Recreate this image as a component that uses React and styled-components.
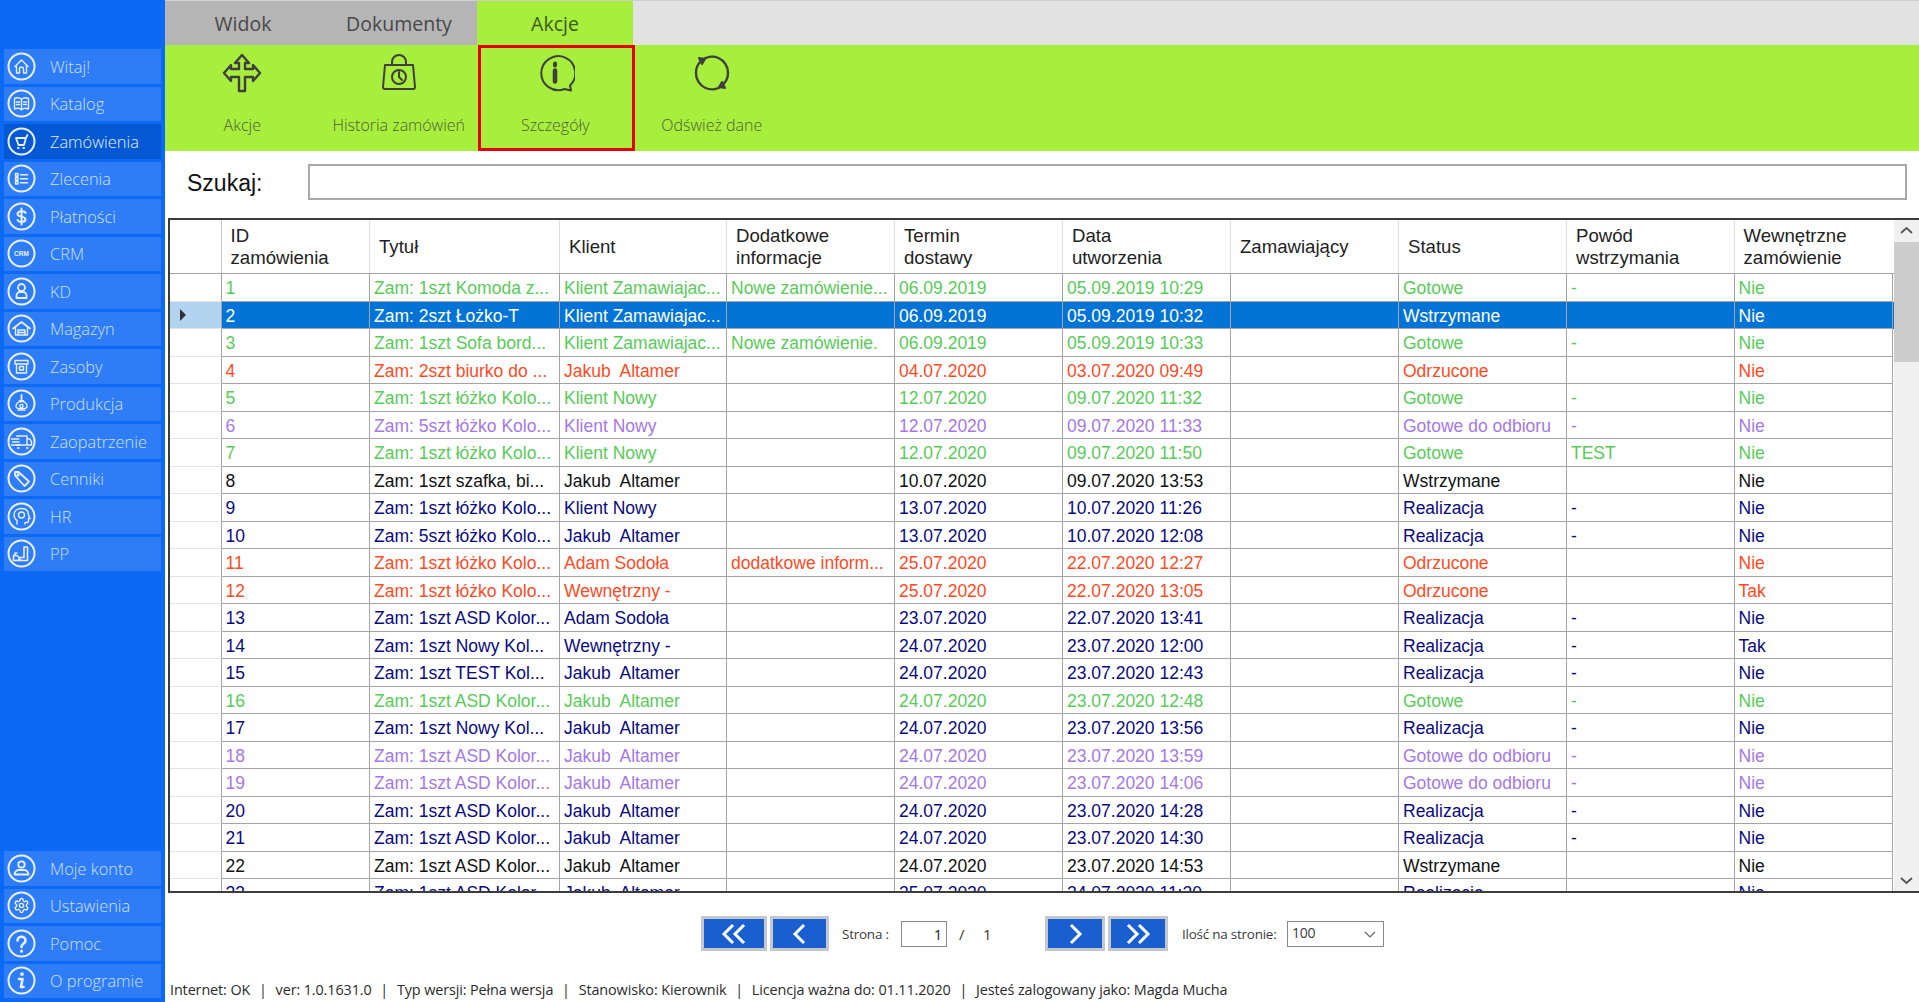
import React from 'react';
import styled, { createGlobalStyle } from 'styled-components';

const Global = createGlobalStyle`
  html, body { margin: 0; padding: 0; background: #fff; }
  body { font-family: "Open Sans", "Liberation Sans", sans-serif; overflow: hidden; }
  * { box-sizing: border-box; }
`;

const COLS = '51.5px 148.5px 190px 167px 168px 168px 168px 168px 168px 167.5px 158.7px';

const tones = {
  green: '#58cb58',
  red: '#ff4a1f',
  navy: '#0a0a80',
  purple: '#a478e6',
  black: '#111111',
  sel: '#ffffff',
};

const Page = styled.div`
  display: flex;
  width: 1919px;
  height: 1002px;
  overflow: hidden;
`;

const Sidebar = styled.nav`
  width: 165px;
  flex: none;
  background: #0c69f6;
  padding: 49px 4px 4px;
  display: flex;
  flex-direction: column;
  justify-content: space-between;
`;

const NavGroup = styled.div`
  display: flex;
  flex-direction: column;
  gap: 3px;
`;

const NavItem = styled.div`
  height: 34.5px;
  display: flex;
  align-items: center;
  gap: 14px;
  padding-left: 3px;
  background: ${p => (p.$active ? '#0558d4' : '#2f7cf7')};
  color: ${p => (p.$active ? '#e6efff' : '#cfe0ff')};
  font-size: 16.4px;
  font-weight: 300;
  white-space: nowrap;
`;

const NavIcon = styled.svg`
  width: 29px;
  height: 29px;
  flex: none;
  fill: none;
  stroke: #e8f0ff;
  stroke-width: 1.4;
  stroke-linecap: round;
  stroke-linejoin: round;
`;

const Main = styled.main`
  flex: 1;
  min-width: 0;
  display: flex;
  flex-direction: column;
`;

const TabBar = styled.div`
  height: 45px;
  flex: none;
  display: flex;
  background: #e2e2e2;
  border-top: 1px solid #cfcfcf;
`;

const Tab = styled.div`
  width: 156px;
  display: flex;
  align-items: center;
  justify-content: center;
  background: ${p => (p.$active ? '#a8ee3c' : '#b5b5b5')};
  color: ${p => (p.$active ? '#3d5a20' : '#484848')};
  font-size: 19.5px;
`;

const Toolbar = styled.div`
  height: 106px;
  flex: none;
  display: flex;
  background: #a8ee3c;
`;

const ToolButton = styled.div`
  width: 156.5px;
  flex: none;
  display: flex;
  flex-direction: column;
  align-items: center;
  padding: ${p => (p.$selected ? '5px 2px 0 0' : '8px 2px 0 0')};
  border: ${p => (p.$selected ? '3px solid #e60000' : 'none')};
  color: #4f5f3a;
  font-size: 16px;
  font-weight: 300;
  white-space: nowrap;
`;

const ToolIcon = styled.svg`
  width: 40px;
  height: 40px;
  flex: none;
  fill: none;
  stroke: #3f3f3f;
  stroke-width: 2;
  stroke-linecap: round;
  stroke-linejoin: round;
`;

const ToolLabel = styled.span`
  margin-top: 21px;
  line-height: 22px;
`;

const SearchRow = styled.div`
  height: 67px;
  flex: none;
  display: flex;
  align-items: center;
  padding: 0 12px 5px 22px;
`;

const SearchLabel = styled.label`
  width: 121px;
  flex: none;
  margin-top: 2px;
  font-family: "Liberation Sans", Arial, sans-serif;
  font-size: 23px;
  color: #111;
`;

const SearchInput = styled.div`
  flex: 1;
  height: 36px;
  border: 2px solid #a9a9a9;
  background: #fff;
`;

const Grid = styled.div`
  height: 675px;
  flex: none;
  margin-left: 3px;
  display: flex;
  border: solid #3c3c3c;
  border-width: 2px 0 2px 2px;
  font-family: "Liberation Sans", Arial, sans-serif;
  font-size: 17.5px;
  overflow: hidden;
`;

const GridBody = styled.div`
  flex: 1;
  min-width: 0;
  overflow: hidden;
`;

const HeadRow = styled.div`
  display: grid;
  grid-template-columns: ${COLS};
  height: 54px;
  border-bottom: 1px solid #a4a4a4;
  color: #222;
  font-size: 18.6px;
`;

const HeadCell = styled.div`
  display: flex;
  align-items: center;
  padding-left: 9px;
  line-height: 22px;
  white-space: pre;
  border-right: 1px solid #dedede;
  &:first-child { border-right-color: #c9c9c9; }
  &:last-child { border-right: none; }
`;

const Row = styled.div`
  display: grid;
  grid-template-columns: ${COLS};
  height: 27.5px;
  color: ${p => tones[p.$tone]};
  background: ${p => (p.$tone === 'sel' ? '#0374d6' : '#fff')};
`;

const Cell = styled.div`
  padding-left: 4px;
  line-height: 28px;
  white-space: pre;
  overflow: hidden;
  border-right: 1px solid #a4a4a4;
  border-bottom: 1px solid #a4a4a4;
`;

const RowHead = styled.div`
  display: flex;
  align-items: center;
  padding-left: 10px;
  background: ${p => (p.$current ? '#b3d4f1' : '#fff')};
  border-right: 1px solid #a4a4a4;
  border-bottom: 1px solid #e6e6e6;
`;

const Marker = styled.span`
  width: 0;
  height: 0;
  border-left: 6px solid #333;
  border-top: 6px solid transparent;
  border-bottom: 6px solid transparent;
`;

const Scrollbar = styled.div`
  width: 25px;
  flex: none;
  padding: 6px 0;
  background: #f0f0f0;
  display: flex;
  flex-direction: column;
  align-items: center;
`;

const ScrollArrow = styled.svg`
  width: 13px;
  height: 8px;
  flex: none;
  fill: none;
  stroke: #555;
  stroke-width: 1.8;
`;

const ScrollTrack = styled.div`
  flex: 1;
  width: 100%;
  margin: 6px 0;
`;

const ScrollThumb = styled.div`
  height: 120px;
  margin-top: 2px;
  background: #cdcdcd;
`;

const Pager = styled.div`
  height: 81px;
  flex: none;
  display: flex;
  align-items: center;
  padding-left: 536px;
  font-size: 13.5px;
  color: #3a3a3a;
  letter-spacing: -0.25px;
`;

const PageButton = styled.div`
  width: ${p => p.$w}px;
  height: 35px;
  flex: none;
  margin-right: ${p => p.$gap || 3}px;
  display: flex;
  align-items: center;
  justify-content: center;
  background: #1a5fd0;
  border: 3px solid #c4c8cc;
`;

const PageGlyph = styled.svg`
  width: 28px;
  height: 22px;
  fill: none;
  stroke: #fff;
  stroke-width: 3;
`;

const PageLabel = styled.span`
  width: ${p => p.$w}px;
  flex: none;
  white-space: nowrap;
`;

const PageInput = styled.div`
  width: 46px;
  height: 26px;
  flex: none;
  border: 1px solid #8a8a8a;
  text-align: right;
  padding-right: 4px;
  line-height: 24px;
  font-size: 15px;
  color: #222;
`;

const PageCount = styled.span`
  width: 98px;
  flex: none;
  padding-left: 12px;
  font-size: 15px;
  word-spacing: 15px;
`;

const PageSize = styled.div`
  width: 97px;
  height: 26px;
  flex: none;
  margin-left: 13px;
  border: 1px solid #8a8a8a;
  display: flex;
  align-items: center;
  justify-content: space-between;
  padding: 0 7px 2px 4px;
  font-size: 14px;
`;

const SizeArrow = styled.svg`
  width: 12px;
  height: 7px;
  margin-top: 3px;
  fill: none;
  stroke: #666;
  stroke-width: 1.2;
`;

const StatusBar = styled.footer`
  display: flex;
  gap: 8.8px;
  padding: 6px 0 0 5px;
  font-size: 14.4px;
  letter-spacing: -0.11px;
  color: #2b2b2b;
  white-space: nowrap;
  line-height: 20px;
`;

const navIcons = {
  home: <><path d="M8 14.5 14.5 8 21 14.5" /><path d="M9.5 13.5V21H12.5V17a2 2 0 0 1 4 0V21H19.5V13.5" /></>,
  book: <><path d="M7.5 9.5c2.5-1 5-1 7 .8 2-1.8 4.5-1.8 7-.8V20c-2.5-1-5-1-7 .8-2-1.8-4.5-1.8-7-.8Z" /><path d="M14.5 10.3V20.8M9.5 13h3M9.5 15.5h3M16.5 13h3M16.5 15.5h3" /></>,
  cart: <><path d="M20.5 8 19 10.8 17 18H11.5L9 11h10" strokeWidth="1.8" /><path d="M11 21h.5M16.5 21h.5" strokeWidth="2.2" /></>,
  list: <><path d="M8.5 9.5H11V12H8.5ZM8.5 13.5H11V16H8.5ZM8.5 17.5H11V20H8.5Z" /><path d="M13.5 10.8h7M13.5 14.8h7M13.5 18.8h7" /></>,
  dollar: <path d="M18.5 11c-1-2.5-7.5-2.5-8 .8-.5 3.7 8.5 2 8 5.7-.5 3.2-7 3-8 .5M14.5 6.500v16" strokeWidth="2" />,
  crm: <text x="14.5" y="16.5" textAnchor="middle" fontSize="6.5" fontWeight="700" fontFamily="Liberation Sans" fill="#e8f0ff" stroke="none">CRM</text>,
  kd: <><circle cx="14.5" cy="10.5" r="3.5" strokeWidth="1.8" /><path d="M9.5 21v-2.5a3.5 3.5 0 0 1 3.5-3.5h3a3.5 3.5 0 0 1 3.5 3.5V21Z" strokeWidth="1.8" /></>,
  store: <><path d="M6 14.5 14.5 8 23 14.5" strokeWidth="1.8" /><path d="M8.5 13v8h12v-8M11 21v-5h7v5M11 18.5h7" /></>,
  box: <><path d="M8 8.5h13V12H8ZM9.5 12v9h10v-9" /><path d="M12.5 14.5h4V18h-4Z" /></>,
  prod: <><path d="M14.5 6v6M12.5 12h4" strokeWidth="1.8" /><path d="M9 17.5c0-3 2.5-5 5.5-5s5.5 2 5.500 5-11 3-11 0Z" /><circle cx="14.5" cy="17" r="1.6" /><path d="M11 21h7" /></>,
  truck: <><path d="M9.5 9H20v9H9.5M20 12h3l1.5 3v3H20" /><path d="M4.5 12H12M5.5 15H12M4.5 18H13" /><path d="M11 21h.5M20 21h.5" strokeWidth="2" /></>,
  tag: <><path d="M8 11.5V8h3.5L22 17.5 17.5 22Z" strokeWidth="1.8" /><circle cx="11" cy="11" r="1" /></>,
  head: <><path d="M10 22v-3.5c-2-1.5-3-3.5-3-5.5 0-4 3-6.500 7.500-6.500s7 2.700 7 6.500L23 16.500h-1.500V19a1.500 1.500 0 0 1-1.500 1.500H18V22" /><circle cx="14.5" cy="13" r="3" /></>,
  machine: <><path d="M6.5 21.5v-5H10l2 2h5V8h3.5v13.5Z" strokeWidth="1.6" /><path d="M11 21.5a1.5 1.5 0 0 1 3 0M8 16.5V14h2" /></>,
  user: <><circle cx="14.5" cy="10.5" r="3.2" strokeWidth="1.8" /><path d="M7.5 20.5c0-3 2.5-4.5 4.5-4.5h5c2 0 4.500 1.500 4.500 4.500Z" strokeWidth="1.8" /></>,
  gear: (
    <g transform="translate(6.1 6.1) scale(.7)" strokeWidth="2">
      <path d="M12.22 2h-.44a2 2 0 0 0-2 2v.18a2 2 0 0 1-1 1.73l-.43.25a2 2 0 0 1-2 0l-.15-.08a2 2 0 0 0-2.73.73l-.22.38a2 2 0 0 0 .73 2.73l.15.1a2 2 0 0 1 1 1.72v.51a2 2 0 0 1-1 1.74l-.15.09a2 2 0 0 0-.73 2.73l.22.38a2 2 0 0 0 2.73.73l.15-.08a2 2 0 0 1 2 0l.43.25a2 2 0 0 1 1 1.73V20a2 2 0 0 0 2 2h.44a2 2 0 0 0 2-2v-.18a2 2 0 0 1 1-1.73l.43-.25a2 2 0 0 1 2 0l.15.08a2 2 0 0 0 2.73-.73l.22-.39a2 2 0 0 0-.73-2.73l-.15-.08a2 2 0 0 1-1-1.74v-.5a2 2 0 0 1 1-1.74l.15-.09a2 2 0 0 0 .73-2.73l-.22-.38a2 2 0 0 0-2.73-.73l-.15.08a2 2 0 0 1-2 0l-.43-.25a2 2 0 0 1-1-1.73V4a2 2 0 0 0-2-2z" />
      <circle cx="12" cy="12" r="3" />
    </g>
  ),
  help: <><path d="M10.5 11.5c0-5 8-5 8 0 0 3-4 3-4 6.5" strokeWidth="2.6" /><path d="M14.5 22v.2" strokeWidth="3" /></>,
  info: <><path d="M15 8v.2" strokeWidth="3.6" /><path d="M12 13h3.5L14 21h2.5" strokeWidth="2.6" /></>,
};

const NavEntry = ({ icon, label, active }) => (
  <NavItem $active={active}>
    <NavIcon viewBox="0 0 29 29">
      <circle cx="14.5" cy="14.5" r="13" strokeWidth="2" />
      {navIcons[icon]}
    </NavIcon>
    {label}
  </NavItem>
);

const topNav = [
  ['home', 'Witaj!'], ['book', 'Katalog'], ['cart', 'Zamówienia', true], ['list', 'Zlecenia'],
  ['dollar', 'Płatności'], ['crm', 'CRM'], ['kd', 'KD'], ['store', 'Magazyn'], ['box', 'Zasoby'],
  ['prod', 'Produkcja'], ['truck', 'Zaopatrzenie'], ['tag', 'Cenniki'], ['head', 'HR'], ['machine', 'PP'],
];
const bottomNav = [['user', 'Moje konto'], ['gear', 'Ustawienia'], ['help', 'Pomoc'], ['info', 'O programie']];

const tools = [
  {
    label: 'Akcje',
    icon: <path d="M20 2l7 8h-4v6h8v-4l7 8-7 8v-4h-8v14h-6V24H9v4l-7-8 7-8v4h8v-6h-4Z" strokeWidth="2.4" />,
  },
  {
    label: 'Historia zamówień',
    icon: <><path d="M6 12h28l2 22a2 2 0 0 1-2 2H6a2 2 0 0 1-2-2Z" /><path d="M13 12V9a7 7 0 0 1 14 0v3" /><circle cx="20" cy="24" r="7" /><path d="M20 19v5l3 3" /></>,
  },
  {
    label: 'Szczegóły',
    selected: true,
    icon: <><path d="M35 32.5a17 17 0 1 0-5.5 3.5l6.5 1.5Z" /><path d="M20 10.5v2" strokeWidth="4" /><path d="M20 17.5v11" strokeWidth="4.5" /></>,
  },
  {
    label: 'Odśwież dane',
    icon: <><path d="M9 8a16 16 0 0 1 27 12 16 16 0 0 1-5 11.5" strokeWidth="2.4" /><path d="M31 32a16 16 0 0 1-27-12A16 16 0 0 1 9 8" strokeWidth="2.4" /><path d="M7 5l6 1-3 5ZM33 35l-6-1 3-5Z" fill="#3f3f3f" /></>,
  },
];

const heads = ['', 'ID\nzamówienia', 'Tytuł', 'Klient', 'Dodatkowe\ninformacje', 'Termin\ndostawy', 'Data\nutworzenia', 'Zamawiający', 'Status', 'Powód\nwstrzymania', 'Wewnętrzne\nzamówienie'];

const JA = 'Jakub  Altamer';
const ZA = 'Klient Zamawiajac...';
const KN = 'Klient Nowy';
const AS = 'Adam Sodoła';
const WE = 'Wewnętrzny -';
const K1 = 'Zam: 1szt łóżko Kolo...';
const ASD = 'Zam: 1szt ASD Kolor...';
const NK = 'Zam: 1szt Nowy Kol...';
const GD = 'Gotowe do odbioru';

const orders = [
  ['green', 'Zam: 1szt Komoda z...', ZA, 'Nowe zamówienie...', '06.09.2019', '05.09.2019 10:29', 'Gotowe', '-', 'Nie'],
  ['sel', 'Zam: 2szt Łożko-T', ZA, '', '06.09.2019', '05.09.2019 10:32', 'Wstrzymane', '', 'Nie'],
  ['green', 'Zam: 1szt Sofa bord...', ZA, 'Nowe zamówienie.', '06.09.2019', '05.09.2019 10:33', 'Gotowe', '-', 'Nie'],
  ['red', 'Zam: 2szt biurko do ...', JA, '', '04.07.2020', '03.07.2020 09:49', 'Odrzucone', '', 'Nie'],
  ['green', K1, KN, '', '12.07.2020', '09.07.2020 11:32', 'Gotowe', '-', 'Nie'],
  ['purple', 'Zam: 5szt łóżko Kolo...', KN, '', '12.07.2020', '09.07.2020 11:33', GD, '-', 'Nie'],
  ['green', K1, KN, '', '12.07.2020', '09.07.2020 11:50', 'Gotowe', 'TEST', 'Nie'],
  ['black', 'Zam: 1szt szafka, bi...', JA, '', '10.07.2020', '09.07.2020 13:53', 'Wstrzymane', '', 'Nie'],
  ['navy', K1, KN, '', '13.07.2020', '10.07.2020 11:26', 'Realizacja', '-', 'Nie'],
  ['navy', 'Zam: 5szt łóżko Kolo...', JA, '', '13.07.2020', '10.07.2020 12:08', 'Realizacja', '-', 'Nie'],
  ['red', K1, AS, 'dodatkowe inform...', '25.07.2020', '22.07.2020 12:27', 'Odrzucone', '', 'Nie'],
  ['red', K1, WE, '', '25.07.2020', '22.07.2020 13:05', 'Odrzucone', '', 'Tak'],
  ['navy', ASD, AS, '', '23.07.2020', '22.07.2020 13:41', 'Realizacja', '-', 'Nie'],
  ['navy', NK, WE, '', '24.07.2020', '23.07.2020 12:00', 'Realizacja', '-', 'Tak'],
  ['navy', 'Zam: 1szt TEST Kol...', JA, '', '24.07.2020', '23.07.2020 12:43', 'Realizacja', '-', 'Nie'],
  ['green', ASD, JA, '', '24.07.2020', '23.07.2020 12:48', 'Gotowe', '-', 'Nie'],
  ['navy', NK, JA, '', '24.07.2020', '23.07.2020 13:56', 'Realizacja', '-', 'Nie'],
  ['purple', ASD, JA, '', '24.07.2020', '23.07.2020 13:59', GD, '-', 'Nie'],
  ['purple', ASD, JA, '', '24.07.2020', '23.07.2020 14:06', GD, '-', 'Nie'],
  ['navy', ASD, JA, '', '24.07.2020', '23.07.2020 14:28', 'Realizacja', '-', 'Nie'],
  ['navy', ASD, JA, '', '24.07.2020', '23.07.2020 14:30', 'Realizacja', '-', 'Nie'],
  ['black', ASD, JA, '', '24.07.2020', '23.07.2020 14:53', 'Wstrzymane', '', 'Nie'],
  ['navy', ASD, JA, '', '25.07.2020', '24.07.2020 11:20', 'Realizacja', '-', 'Nie'],
];

const statusParts = [
  'Internet: OK', '|', 'ver: 1.0.1631.0', '|', 'Typ wersji: Pełna wersja', '|',
  'Stanowisko: Kierownik', '|', 'Licencja ważna do: 01.11.2020', '|', 'Jesteś zalogowany jako: Magda Mucha',
];

const OrderRow = ({ id, order }) => {
  const [tone, title, client, info, due, created, status, reason, internal] = order;
  return (
    <Row $tone={tone}>
      <RowHead $current={tone === 'sel'}>{tone === 'sel' && <Marker />}</RowHead>
      {[id, title, client, info, due, created, '', status, reason, internal].map((text, i) => (
        <Cell key={i}>{text}</Cell>
      ))}
    </Row>
  );
};

const Chevrons = ({ d }) => (
  <PageGlyph viewBox="0 0 28 22">
    {d.map((p, i) => <polyline key={i} points={p} />)}
  </PageGlyph>
);

export default function App() {
  return (
    <Page>
      <Global />
      <Sidebar>
        <NavGroup>
          {topNav.map(([icon, label, active]) => <NavEntry key={label} icon={icon} label={label} active={active} />)}
        </NavGroup>
        <NavGroup>
          {bottomNav.map(([icon, label]) => <NavEntry key={label} icon={icon} label={label} />)}
        </NavGroup>
      </Sidebar>
      <Main>
        <TabBar>
          <Tab>Widok</Tab>
          <Tab>Dokumenty</Tab>
          <Tab $active>Akcje</Tab>
        </TabBar>
        <Toolbar>
          {tools.map(t => (
            <ToolButton key={t.label} $selected={t.selected}>
              <ToolIcon viewBox="0 0 40 40">{t.icon}</ToolIcon>
              <ToolLabel>{t.label}</ToolLabel>
            </ToolButton>
          ))}
        </Toolbar>
        <SearchRow>
          <SearchLabel>Szukaj:</SearchLabel>
          <SearchInput />
        </SearchRow>
        <Grid>
          <GridBody>
            <HeadRow>
              {heads.map((h, i) => <HeadCell key={i}>{h}</HeadCell>)}
            </HeadRow>
            {orders.map((o, i) => <OrderRow key={i} id={i + 1} order={o} />)}
          </GridBody>
          <Scrollbar>
            <ScrollArrow viewBox="0 0 13 8"><polyline points="1,7 6.5,2 12,7" /></ScrollArrow>
            <ScrollTrack><ScrollThumb /></ScrollTrack>
            <ScrollArrow viewBox="0 0 13 8"><polyline points="1,1 6.5,6 12,1" /></ScrollArrow>
          </Scrollbar>
        </Grid>
        <Pager>
          <PageButton $w={66}><Chevrons d={['13,2 4,11 13,20', '24,2 15,11 24,20']} /></PageButton>
          <PageButton $w={59} $gap={13}><Chevrons d={['18,2 9,11 18,20']} /></PageButton>
          <PageLabel $w={59}>Strona :</PageLabel>
          <PageInput>1</PageInput>
          <PageCount>/ 1</PageCount>
          <PageButton $w={60}><Chevrons d={['10,2 19,11 10,20']} /></PageButton>
          <PageButton $w={60} $gap={14}><Chevrons d={['4,2 13,11 4,20', '15,2 24,11 15,20']} /></PageButton>
          <PageLabel $w={92}>Ilość na stronie:</PageLabel>
          <PageSize>
            100
            <SizeArrow viewBox="0 0 12 7"><polyline points="1,1 6,6 11,1" /></SizeArrow>
          </PageSize>
        </Pager>
        <StatusBar>
          {statusParts.map((part, i) => <span key={i}>{part}</span>)}
        </StatusBar>
      </Main>
    </Page>
  );
}
